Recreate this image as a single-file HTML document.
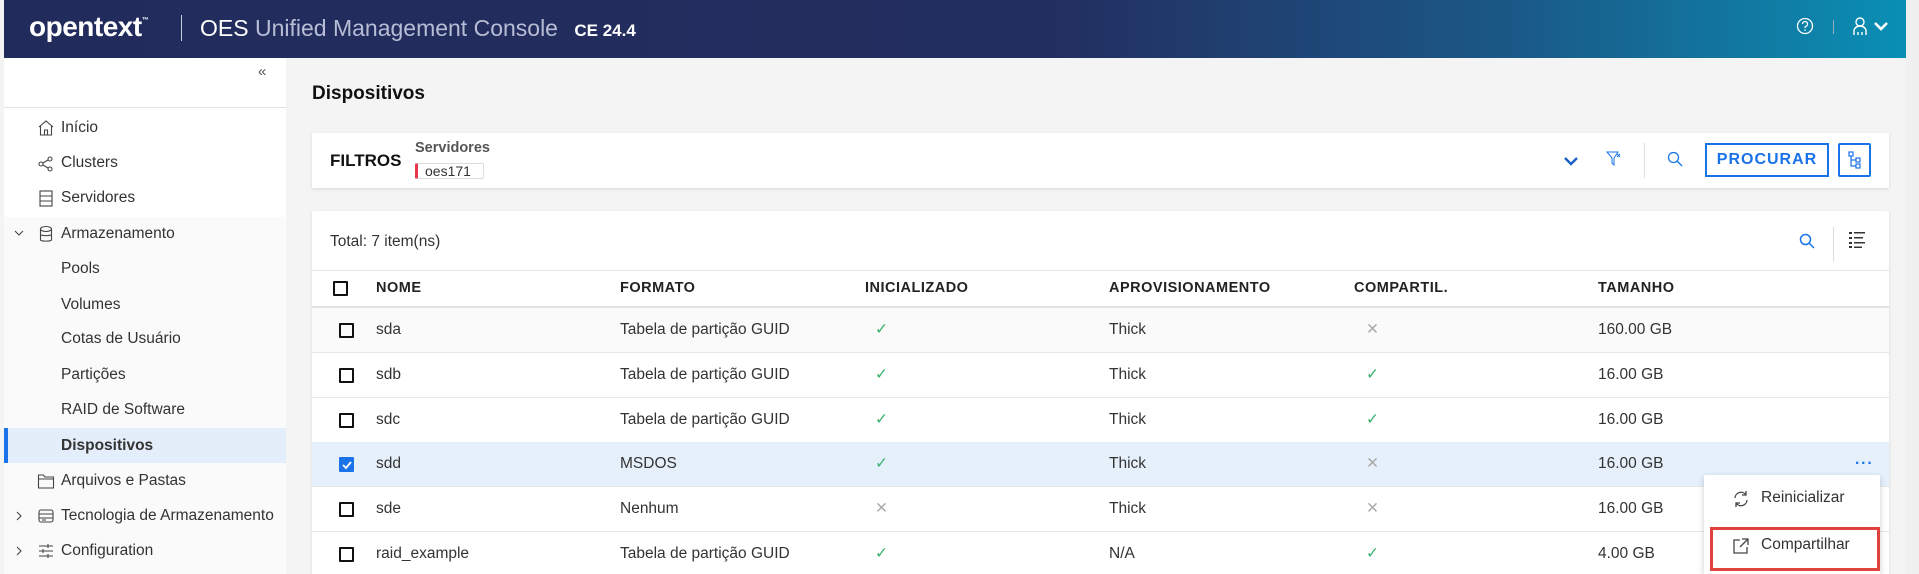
<!DOCTYPE html>
<html><head><meta charset="utf-8"><style>
*{box-sizing:border-box;margin:0;padding:0}
html,body{width:1919px;height:574px;overflow:hidden}
body{background:#f4f4f4;font-family:"Liberation Sans",sans-serif;color:#333;position:relative}
.abs{position:absolute}
.hdr{left:0;top:0;width:1906px;height:58px;background:linear-gradient(90deg,#222c5c 0%,#232e60 55%,#1a5a88 80%,#0a8fb4 100%);border-left:4px solid #f4f4f4}
.side{left:4px;top:58px;width:282px;height:516px;background:#fff}
.nav{position:absolute;left:0;width:282px;height:35px;font-size:15.5px;color:#333;line-height:35px}
.nav span{position:absolute;left:57px}
.ico{position:absolute;left:33px;top:9px}
.card{background:#fff;box-shadow:0 1px 3px rgba(0,0,0,.12)}
.th{position:absolute;top:280px;font-size:14.5px;font-weight:bold;letter-spacing:.5px;color:#222}
.row{position:absolute;left:312px;width:1577px;height:45px;border-bottom:1px solid #e6e6e6}
.c{position:absolute;top:0;line-height:44px;font-size:15.5px;color:#333}
.cb{position:absolute;left:27px;top:15px;width:15px;height:15px;border:2px solid #111;border-radius:1px}
</style></head><body>
<div class="abs hdr">
 <div class="abs" style="left:25px;top:11px;color:#fff;font-weight:bold;font-size:28px;letter-spacing:-.5px">opentext<sup style="font-size:7px;vertical-align:14px">™</sup></div>
 <div class="abs" style="left:177px;top:15px;width:1px;height:26px;background:#c8cbe0"></div>
 <div class="abs" style="left:196px;top:15px;font-size:23px;color:#fff;white-space:nowrap">OES <span style="color:#b8bdd6">Unified Management Console</span> <span style="font-size:17px;font-weight:bold;color:#fff;margin-left:10px">CE 24.4</span></div>
 <svg class="abs" style="left:1792px;top:17px" width="18" height="18" viewBox="0 0 18 18"><circle cx="9" cy="9" r="7.5" fill="none" stroke="#fff" stroke-width="1.3"/><path d="M6.5 7a2.5 2.5 0 1 1 3.5 2.3c-.8.4-1 .9-1 1.7" fill="none" stroke="#fff" stroke-width="1.3"/><circle cx="9" cy="13" r=".8" fill="#fff"/></svg>
 <div class="abs" style="left:1829px;top:20px;width:1px;height:14px;background:#9ab"></div>
 <svg class="abs" style="left:1848px;top:16px" width="16" height="20" viewBox="0 0 16 20"><circle cx="8" cy="6" r="4" fill="none" stroke="#fff" stroke-width="1.4"/><path d="M2 19v-4a6 5 0 0 1 12 0v4M6 19v-3M10 19v-3" fill="none" stroke="#fff" stroke-width="1.4"/></svg>
 <svg class="abs" style="left:1869px;top:21px" width="16" height="11" viewBox="0 0 16 11"><path d="M2 2l6 6 6-6" fill="none" stroke="#fff" stroke-width="2.6"/></svg>
</div>
<div class="abs" style="left:1906px;top:0;width:13px;height:574px;background:#f0f0f0"></div>
<div class="abs side">
 <div class="abs" style="left:254px;top:5px;color:#555;font-size:15px">«</div>
 <div class="abs" style="left:0;top:49px;width:282px;height:1px;background:#e2e2e2"></div>
 <div class="abs" style="left:0;top:159px;width:282px;height:357px;background:#fafafa"></div>
 <div class="nav" style="top:52px"><svg class="ico" width="18" height="18" viewBox="0 0 18 18" fill="none" stroke="#444" stroke-width="1.1"><path d="M2 8L9 2l7 6M3.5 7v9h11V7M7.5 16v-5h3v5"/></svg><span>Início</span></div>
 <div class="nav" style="top:87px"><svg class="ico" width="18" height="18" viewBox="0 0 18 18" fill="none" stroke="#444" stroke-width="1.1"><circle cx="4" cy="10" r="2"/><circle cx="13" cy="5" r="2"/><circle cx="13" cy="15" r="2"/><path d="M6 9l5-3M6 11l5 3"/></svg><span>Clusters</span></div>
 <div class="nav" style="top:122px"><svg class="ico" width="18" height="18" viewBox="0 0 18 18" fill="none" stroke="#444" stroke-width="1.1"><rect x="3" y="2" width="12" height="15"/><path d="M3 7h12M3 12h12"/></svg><span>Servidores</span></div>
 <div class="nav" style="top:158px"><svg class="abs" style="left:10px;top:14px" width="10" height="8"><path d="M1 1l4 4 4-4" fill="none" stroke="#444" stroke-width="1.1"/></svg><svg class="ico" width="18" height="18" viewBox="0 0 18 18" fill="none" stroke="#444" stroke-width="1.1"><ellipse cx="9" cy="4" rx="5.5" ry="2.5"/><path d="M3.5 4v11c0 1.5 11 1.5 11 0V4M3.5 9.5c0 1.5 11 1.5 11 0"/></svg><span>Armazenamento</span></div>
 <div class="nav" style="top:193px"><span>Pools</span></div>
 <div class="nav" style="top:229px"><span>Volumes</span></div>
 <div class="nav" style="top:263px"><span>Cotas de Usuário</span></div>
 <div class="nav" style="top:299px"><span>Partições</span></div>
 <div class="nav" style="top:334px"><span>RAID de Software</span></div>
 <div class="nav" style="top:370px;background:#e4eefa;border-left:4px solid #1a73e8;height:35px"><span style="left:53px;font-weight:bold">Dispositivos</span></div>
 <div class="nav" style="top:405px"><svg class="ico" width="18" height="18" viewBox="0 0 18 18" fill="none" stroke="#444" stroke-width="1.1"><path d="M1.5 3h5l1.5 2h8.5v11h-15zM1.5 7h15"/></svg><span>Arquivos e Pastas</span></div>
 <div class="nav" style="top:440px"><svg class="abs" style="left:12px;top:13px" width="8" height="10"><path d="M1 1l4 4-4 4" fill="none" stroke="#444" stroke-width="1.1"/></svg><svg class="ico" width="18" height="18" viewBox="0 0 18 18" fill="none" stroke="#444" stroke-width="1.1"><rect x="2" y="3" width="14" height="12" rx="2"/><path d="M2 7h14M2 11h14M5 13h4"/></svg><span>Tecnologia de Armazenamento</span></div>
 <div class="nav" style="top:475px"><svg class="abs" style="left:12px;top:13px" width="8" height="10"><path d="M1 1l4 4-4 4" fill="none" stroke="#444" stroke-width="1.1"/></svg><svg class="ico" width="18" height="18" viewBox="0 0 18 18" fill="none" stroke="#444" stroke-width="1.1"><path d="M2 4h14M2 9h14M2 14h14M11 2v4M6 7v4M11 12v4"/></svg><span>Configuration</span></div>
</div>

<div class="abs" style="left:312px;top:83px;font-size:19px;font-weight:bold;color:#111">Dispositivos</div>

<div class="abs card" style="left:312px;top:133px;width:1577px;height:55px">
 <div class="abs" style="left:18px;top:18px;font-size:17px;font-weight:bold;color:#111">FILTROS</div>
 <div class="abs" style="left:103px;top:7px;font-size:14.5px;font-weight:bold;color:#555">Servidores</div>
 <div class="abs" style="left:103px;top:30px;width:69px;height:16px;border:1px solid #ddd;border-left:3px solid #e8354a;border-radius:2px;font-size:14px;line-height:14px;padding-left:7px;color:#333">oes171</div>
 <svg class="abs" style="left:1251px;top:23px" width="16" height="10"><path d="M2 2l6 6 6-6" fill="none" stroke="#1a5fc4" stroke-width="2.4"/></svg>
 <svg class="abs" style="left:1294px;top:17px" width="16" height="18" viewBox="0 0 16 18" fill="none" stroke="#1a73e8" stroke-width="1"><path d="M1 2h11l-4 6v7l-2-2V8z"/><path d="M11 4l3 3M14 4l-3 3"/></svg>
 <div class="abs" style="left:1332px;top:10px;width:1px;height:35px;background:#ddd"></div>
 <svg class="abs" style="left:1354px;top:17px" width="18" height="18" viewBox="0 0 18 18" fill="none" stroke="#1a73e8" stroke-width="1.3"><circle cx="7.5" cy="7.5" r="5"/><path d="M11 11l5 5"/></svg>
 <div class="abs" style="left:1393px;top:10px;width:124px;height:34px;border:2px solid #1a73e8;color:#1a73e8;font-weight:bold;font-size:16px;letter-spacing:1px;text-align:center;line-height:30px">PROCURAR</div>
 <div class="abs" style="left:1526px;top:10px;width:33px;height:34px;border:2px solid #1a73e8;border-radius:2px"><svg style="position:absolute;left:8px;top:6px" width="14" height="18" viewBox="0 0 14 18" fill="none" stroke="#1a73e8" stroke-width="1.2"><rect x="1" y="1" width="4" height="4"/><rect x="8" y="7" width="4" height="4"/><rect x="8" y="13" width="4" height="4"/><path d="M3 5v10h5M3 9h5"/></svg></div>
</div>

<div class="abs card" style="left:312px;top:211px;width:1577px;height:363px">
 <div class="abs" style="left:18px;top:22px;font-size:15.5px;color:#333">Total: 7 item(ns)</div>
 <svg class="abs" style="left:1486px;top:21px" width="18" height="18" viewBox="0 0 18 18" fill="none" stroke="#1a73e8" stroke-width="1.5"><circle cx="7.5" cy="7.5" r="5"/><path d="M11 11l5 5"/></svg>
 <div class="abs" style="left:1521px;top:16px;width:1px;height:35px;background:#ddd"></div>
 <svg class="abs" style="left:1536px;top:20px" width="18" height="18" viewBox="0 0 18 18" fill="#333"><rect x="1" y="1" width="3" height="2"/><rect x="6" y="1" width="11" height="1.5"/><rect x="1" y="6" width="3" height="2"/><rect x="6" y="6" width="9" height="1.5"/><rect x="1" y="11" width="3" height="2"/><rect x="6" y="11" width="11" height="1.5"/><rect x="1" y="15" width="3" height="2"/><rect x="6" y="15.5" width="8" height="1.5"/></svg>
 <div class="abs" style="left:0;top:59px;width:1577px;height:1px;background:#e6e6e6"></div>
</div>
<div class="abs" style="left:312px;top:306px;width:1577px;height:2px;background:#e2e2e2"></div>
<div class="cb abs" style="left:333px;top:281px"></div>
<div class="th" style="left:376px">NOME</div>
<div class="th" style="left:620px">FORMATO</div>
<div class="th" style="left:865px">INICIALIZADO</div>
<div class="th" style="left:1109px">APROVISIONAMENTO</div>
<div class="th" style="left:1354px">COMPARTIL.</div>
<div class="th" style="left:1598px">TAMANHO</div>

<div class="row" style="top:308px;background:#fafafa"><div class="cb"></div><div class="c" style="left:64px">sda</div><div class="c" style="left:308px">Tabela de partição GUID</div><div class="c" style="left:563px;color:#3cb371">✓</div><div class="c" style="left:797px">Thick</div><div class="c" style="left:1054px;color:#aaa">✕</div><div class="c" style="left:1286px">160.00 GB</div></div>
<div class="row" style="top:353px"><div class="cb"></div><div class="c" style="left:64px">sdb</div><div class="c" style="left:308px">Tabela de partição GUID</div><div class="c" style="left:563px;color:#3cb371">✓</div><div class="c" style="left:797px">Thick</div><div class="c" style="left:1054px;color:#3cb371">✓</div><div class="c" style="left:1286px">16.00 GB</div></div>
<div class="row" style="top:398px"><div class="cb"></div><div class="c" style="left:64px">sdc</div><div class="c" style="left:308px">Tabela de partição GUID</div><div class="c" style="left:563px;color:#3cb371">✓</div><div class="c" style="left:797px">Thick</div><div class="c" style="left:1054px;color:#3cb371">✓</div><div class="c" style="left:1286px">16.00 GB</div></div>
<div class="row" style="top:442px;background:#e5f0fb"><div class="cb" style="background:#1a73e8;border-color:#1a73e8"><svg style="position:absolute;left:1px;top:1px" width="10" height="10"><path d="M1 5l3 3 5-6" fill="none" stroke="#fff" stroke-width="1.8"/></svg></div><div class="c" style="left:64px">sdd</div><div class="c" style="left:308px">MSDOS</div><div class="c" style="left:563px;color:#3cb371">✓</div><div class="c" style="left:797px">Thick</div><div class="c" style="left:1054px;color:#aaa">✕</div><div class="c" style="left:1286px">16.00 GB</div><div class="c" style="left:1543px;color:#1a73e8;font-weight:bold;letter-spacing:1px">···</div></div>
<div class="row" style="top:487px"><div class="cb"></div><div class="c" style="left:64px">sde</div><div class="c" style="left:308px">Nenhum</div><div class="c" style="left:563px;color:#aaa">✕</div><div class="c" style="left:797px">Thick</div><div class="c" style="left:1054px;color:#aaa">✕</div><div class="c" style="left:1286px">16.00 GB</div></div>
<div class="row" style="top:532px;border:none;height:42px"><div class="cb"></div><div class="c" style="left:64px">raid_example</div><div class="c" style="left:308px">Tabela de partição GUID</div><div class="c" style="left:563px;color:#3cb371">✓</div><div class="c" style="left:797px">N/A</div><div class="c" style="left:1054px;color:#3cb371">✓</div><div class="c" style="left:1286px">4.00 GB</div></div>

<div class="abs" style="left:1704px;top:475px;width:176px;height:99px;background:#fff;box-shadow:0 2px 6px rgba(0,0,0,.2)">
 <svg class="abs" style="left:28px;top:15px" width="18" height="18" viewBox="0 0 18 18" fill="none" stroke="#444" stroke-width="1.3"><path d="M3 8a6 6 0 0 1 11-3M15 10a6 6 0 0 1-11 3"/><path d="M14 1v4h-4M4 17v-4h4"/></svg>
 <div class="abs" style="left:57px;top:14px;font-size:15.5px;color:#333">Reinicializar</div>
 <div class="abs" style="left:6px;top:52px;width:170px;height:44px;border:3px solid #e0433b"></div>
 <svg class="abs" style="left:28px;top:62px" width="18" height="18" viewBox="0 0 18 18" fill="none" stroke="#444" stroke-width="1.3"><path d="M8 3H2v13h13v-6M10 2h6v6M16 2l-8 8"/></svg>
 <div class="abs" style="left:57px;top:61px;font-size:15.5px;color:#333">Compartilhar</div>
</div>
</body></html>
